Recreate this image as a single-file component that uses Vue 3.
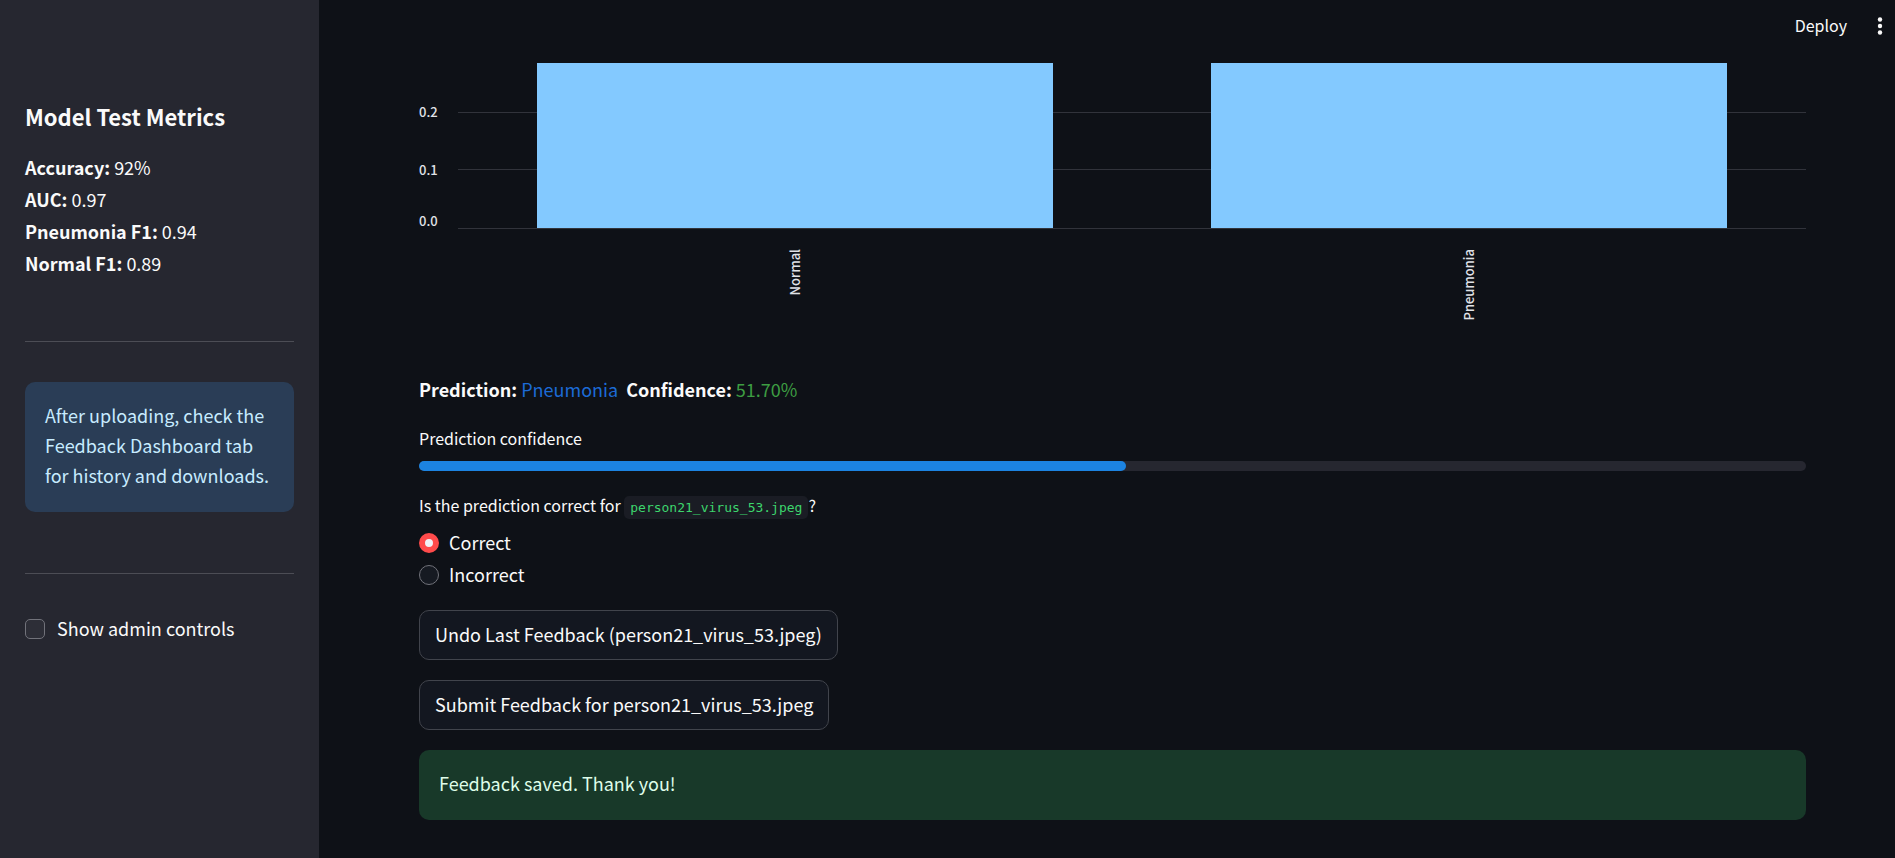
<script setup>
import { ref } from 'vue'

const metrics = [
  { name: 'Accuracy', value: '92%' },
  { name: 'AUC', value: '0.97' },
  { name: 'Pneumonia F1', value: '0.94' },
  { name: 'Normal F1', value: '0.89' },
]
const classes = ['Normal', 'Pneumonia']
const ticks = ['0.2', '0.1', '0.0']
const file = 'person21_virus_53.jpeg'
const confidence = 51
const verdict = ref('Correct')
const admin = ref(false)
</script>

<template>
  <div class="app">
    <aside class="sidebar">
      <h3>Model Test Metrics</h3>
      <ul class="metrics">
        <li v-for="m in metrics" :key="m.name"><strong>{{ m.name }}:</strong> {{ m.value }}</li>
      </ul>
      <hr />
      <div class="alert info">After uploading, check the Feedback Dashboard tab for history and downloads.</div>
      <hr />
      <label class="option admin">
        <input v-model="admin" type="checkbox" />
        <span>Show admin controls</span>
      </label>
    </aside>

    <div class="page">
      <header class="toolbar">
        <button type="button" class="deploy">Deploy</button>
        <button type="button" class="menu" aria-label="Main menu">
          <svg width="20" height="20" viewBox="0 0 20 20" fill="currentColor">
            <circle cx="10" cy="3.5" r="2.2" />
            <circle cx="10" cy="10" r="2.2" />
            <circle cx="10" cy="16.5" r="2.2" />
          </svg>
        </button>
      </header>

      <main class="content">
        <section class="chart">
          <div class="y-axis"><span v-for="t in ticks" :key="t">{{ t }}</span></div>
          <div class="grid-lines"><i v-for="t in ticks" :key="t"></i></div>
          <div class="bars"><div v-for="c in classes" :key="c" class="bar"></div></div>
          <div class="x-axis">
            <div v-for="c in classes" :key="c"><span>{{ c }}</span></div>
          </div>
        </section>

        <p class="result">
          <strong>Prediction:</strong> <span class="blue">Pneumonia</span> &nbsp;<strong>Confidence:</strong>
          <span class="green"> 51.70%</span>
        </p>

        <p id="progress-label" class="caption">Prediction confidence</p>
        <div class="track" role="progressbar" aria-labelledby="progress-label" :aria-valuenow="confidence">
          <div class="fill" :style="{ width: confidence + '%' }"></div>
        </div>

        <fieldset>
          <legend class="caption">Is the prediction correct for <code>{{ file }}</code>?</legend>
          <label v-for="v in ['Correct', 'Incorrect']" :key="v" class="option">
            <input v-model="verdict" type="radio" name="verdict" :value="v" />
            <span>{{ v }}</span>
          </label>
        </fieldset>

        <div class="actions">
          <button type="button" class="btn">Undo Last Feedback ({{ file }})</button>
          <button type="button" class="btn">Submit Feedback for {{ file }}</button>
        </div>
        <div class="alert success" role="status">Feedback saved. Thank you!</div>
      </main>
    </div>
  </div>
</template>

<style>
body {
  margin: 0;
  background: #0e1117;
}
</style>

<style scoped>
* {
  box-sizing: border-box;
}
.app {
  display: flex;
  min-height: 100vh;
  color: #fafafa;
  font-family: 'Noto Sans CJK SC', 'Noto Sans', sans-serif;
  font-size: 18px;
  line-height: 32px;
}
button {
  color: inherit;
  font: inherit;
  cursor: pointer;
}
.sidebar {
  flex: 0 0 319px;
  padding: 98px 25px 0;
  background: #262730;
}
h3 {
  margin: 0 0 17px;
  font-size: 22px;
  font-weight: 700;
  line-height: 36px;
}
.metrics {
  margin: 0;
  padding: 0 0 1px;
  list-style: none;
}
hr {
  height: 1px;
  margin: 61px 0 40px;
  border: 0;
  background: #4c4d55;
}
.alert {
  padding: 18px 20px 22px;
  border-radius: 10px;
  line-height: 30px;
}
.info {
  background: #2a3d56;
  color: #c7ebff;
}
.option {
  display: flex;
  align-items: center;
  gap: 10px;
  width: max-content;
}
.option span {
  padding-bottom: 2px;
  line-height: 30px;
}
.option input {
  appearance: none;
  width: 20px;
  height: 20px;
  margin: 0;
  border: 1px solid #71727a;
  border-radius: 10px;
  background: #161a22;
}
.option input:checked {
  border: 6px solid #ff4b4b;
  background: #f0f2f6;
}
.admin {
  gap: 12px;
  margin-top: -1px;
}
.option input[type='checkbox'] {
  border-radius: 5px;
  background: #2d2e37;
}
.page {
  flex: 1;
  min-width: 0;
}
.toolbar {
  display: flex;
  align-items: center;
  justify-content: flex-end;
  gap: 23px;
  height: 63px;
  padding: 0 5px 12px 0;
}
.toolbar button {
  padding: 0;
  border: 0;
  background: none;
}
.toolbar .deploy {
  padding-bottom: 1px;
  font-size: 16px;
}
.menu {
  display: flex;
}
.content {
  padding: 0 89px 38px 100px;
}
.chart {
  display: grid;
  grid-template-columns: 39px 1fr;
  grid-template-rows: 166px 92px;
  color: #e0e2e8;
  font-size: 13px;
  font-weight: 500;
  line-height: 20px;
}
.y-axis {
  display: grid;
  grid-template-rows: 58px 51px 20px;
  padding-top: 39px;
}
.grid-lines {
  display: grid;
  grid-area: 1 / 2;
  grid-template-rows: 50px 57px 59px;
}
.grid-lines i {
  border-bottom: 1px solid #31333b;
}
.bars {
  display: grid;
  grid-area: 1 / 2;
  grid-template-columns: 1fr 1fr;
  padding-bottom: 1px;
}
.bar {
  width: 76.6%;
  margin: 0 auto;
  background: #83c9ff;
}
.x-axis {
  display: grid;
  grid-area: 2 / 2;
  grid-template-columns: 1fr 1fr;
  padding-top: 20px;
}
.x-axis div {
  display: flex;
  justify-content: center;
  align-items: flex-start;
}
.x-axis span {
  writing-mode: vertical-rl;
  transform: rotate(180deg);
}
.result {
  margin: 52px 0 17px;
}
.blue {
  color: #1c6bd6;
}
.green {
  color: #3d9d42;
}
.caption {
  margin: 0;
  font-size: 16px;
  line-height: 32px;
}
.track {
  height: 10px;
  margin: 7px 0 18px;
  border-radius: 5px;
  background: #262730;
}
.fill {
  height: 100%;
  border-radius: 5px;
  background: #1c83e1;
}
fieldset {
  min-width: 0;
  margin: 0;
  padding: 0;
  border: 0;
}
legend {
  padding: 0 0 3px;
}
code {
  padding: 4px 6px;
  border-radius: 5px;
  background: #1a1c24;
  color: #3dd56d;
  font-family: 'DejaVu Sans Mono', 'Liberation Mono', monospace;
  font-size: 13px;
}
.actions {
  display: flex;
  flex-direction: column;
  align-items: flex-start;
  gap: 20px;
  margin: 19px 0 20px;
}
.btn {
  height: 50px;
  padding: 0 15px 2px;
  border: 1px solid #41444c;
  border-radius: 10px;
  background: #131720;
}
.success {
  background: #183929;
  color: #dffde9;
}
</style>
